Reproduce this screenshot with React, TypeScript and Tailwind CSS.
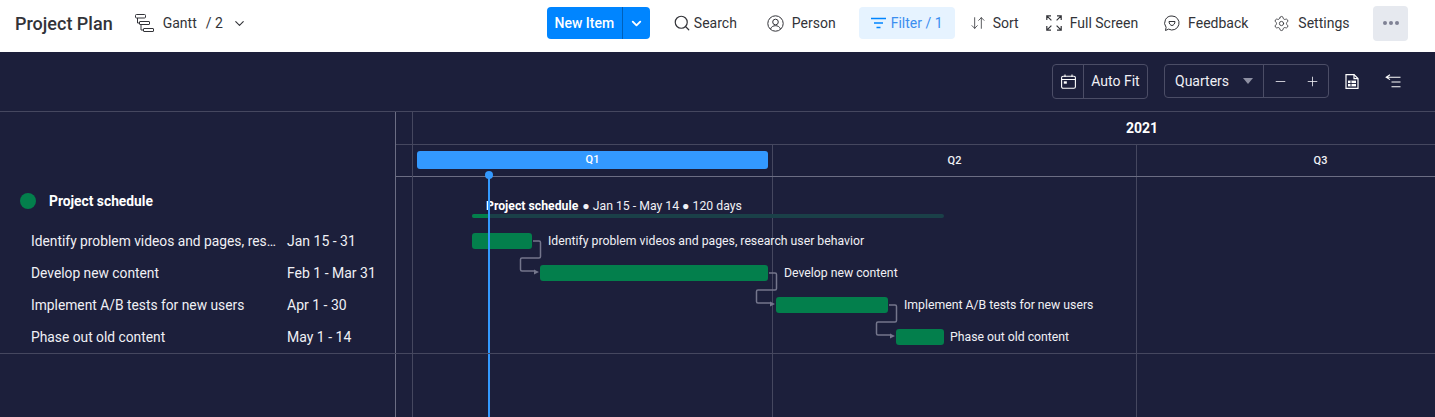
import { ChevronDown, Search, ArrowDownUp, Settings, Plus, Minus } from 'lucide-react'

function GanttIcon() {
  return (
    <svg width="19" height="19" viewBox="0 0 19 19" fill="none" stroke="#323338" strokeWidth="1">
      <rect x="0.5" y="0.5" width="10" height="3.5" rx="1" />
      <rect x="4.500" y="7.500" width="10" height="3" rx="0.5" />
      <rect x="8.500" y="14.500" width="10" height="3" rx="0.5" />
      <path d="M2.500 4v5h2M6 10.500V16h2.500" />
    </svg>
  )
}

function PersonIcon() {
  return (
    <svg width="17" height="17" viewBox="0 0 17 17" fill="none" stroke="#323338" strokeWidth="1">
      <circle cx="8.5" cy="8.5" r="7.7" />
      <circle cx="8.5" cy="7" r="2.8" />
      <path d="M3.5 14c1-2.5 3-3.3 5-3.3s4 .8 5 3.3" />
    </svg>
  )
}

function FilterIcon() {
  return (
    <svg width="16" height="12" viewBox="0 0 16 12" fill="none" stroke="#0085ff" strokeWidth="1.6">
      <path d="M0 1.5h15M3 6h9M5.5 10.5h4" />
    </svg>
  )
}

function FullScreenIcon() {
  return (
    <svg width="16" height="16" viewBox="0 0 16 16" fill="none" stroke="#323338" strokeWidth="1.2">
      <path d="M.8 5V.8H5M.8.8l4.6 4.6M15.2 5V.8H11M15.2.8l-4.6 4.6M.8 11v4.2H5M.8 15.2l4.6-4.6M15.2 11v4.2H11M15.2 15.2l-4.6-4.6" />
    </svg>
  )
}

function FeedbackIcon() {
  return (
    <svg width="16" height="17" viewBox="0 0 16 17" fill="none" stroke="#323338" strokeWidth="1">
      <path d="M8 1a7 7 0 1 1-3.4 13.1L1.5 15.5l.6-3.2A7 7 0 0 1 8 1Z" />
      <path d="M5 6.500h6c0 2-1.500 4-3 4s-3-2-3-4Z" />
    </svg>
  )
}

function CalendarIcon() {
  return (
    <svg width="15" height="15" viewBox="0 0 15 15" fill="none" stroke="#fff" strokeWidth="1.1">
      <rect x="0.6" y="2.2" width="13.8" height="12" rx="1.5" />
      <path d="M0.6 5.5h13.8M4 .5v2.5M11 .5v2.5" />
      <rect x="2.8" y="7.3" width="3" height="2.4" fill="#fff" stroke="none" />
    </svg>
  )
}

function ExportIcon() {
  return (
    <svg width="14" height="15" viewBox="0 0 14 15" fill="none">
      <path d="M1 .6h8l4 4v9.8H1Z" fill="#1c1f3b" stroke="#fff" strokeWidth="1.2" />
      <path d="M9 .6v4h4" stroke="#fff" strokeWidth="1.2" />
      <rect x="3" y="6.6" width="8" height="5.8" fill="#fff" />
      <path d="M3 9.5h8M6 6.6v5.8" stroke="#1c1f3b" strokeWidth="0.9" />
    </svg>
  )
}

function CollapseIcon() {
  return (
    <svg width="16" height="14" viewBox="0 0 16 14" fill="none" stroke="#fff" strokeWidth="1.1">
      <path d="M5 .7 1.2 3.2 5 5.6M1.2 3.2h14.3M6.5 8h9M6.5 12.8h9" />
    </svg>
  )
}

function ToolItem({ icon, label, className }: { icon: React.ReactNode; label: string; className: string }) {
  return (
    <div className={`flex items-center text-[14px] text-[#323338] ${className}`}>
      {icon}
      <span>{label}</span>
    </div>
  )
}

const tasks = [
  { name: 'Identify problem videos and pages, research user behavior', dates: 'Jan 15 - 31' },
  { name: 'Develop new content', dates: 'Feb 1 - Mar 31' },
  { name: 'Implement A/B tests for new users', dates: 'Apr 1 - 30' },
  { name: 'Phase out old content', dates: 'May 1 - 14' },
]

const bars = [
  { left: 59, width: 60, top: 56, labelLeft: 135 },
  { left: 127, width: 228, top: 88, labelLeft: 371 },
  { left: 363, width: 112, top: 120, labelLeft: 491 },
  { left: 483, width: 48, top: 152, labelLeft: 537 },
]

function Timeline() {
  return (
    <div className="relative flex-1 min-w-0 overflow-hidden text-[12.25px] text-[#f0f0f5]">
      <div className="h-[33px] w-[1458px] flex items-center justify-center border-b border-[#45475f]">
        <span className="text-[14px] font-bold text-white">2021</span>
      </div>
      <div className="h-[32px] w-[1100px] flex border-b border-[#6b6d83] text-[11px] font-medium">
        <div className="w-[360px] pl-[4px] py-[6px] border-r border-[#45475f]">
          <div className="h-[18px] w-[351px] pt-[1px] rounded-[3px] bg-[#3399ff] flex items-center justify-center text-white">Q1</div>
        </div>
        <div className="w-[364px] pt-[1px] flex items-center justify-center border-r border-[#45475f]">Q2</div>
        <div className="w-[367px] pt-[1px] flex items-center justify-center">Q3</div>
      </div>
      {/* grid lines through the chart */}
      <div className="absolute left-[359px] top-[65px] bottom-0 w-px bg-[#45475f]" />
      <div className="absolute left-[723px] top-[65px] bottom-0 w-px bg-[#45475f]" />

      {/* chart canvas, top is the y=177 row */}
      <div className="relative">
        <div className="absolute left-[73px] top-[20px] leading-[18px] whitespace-nowrap">
          <span className="font-bold text-white mr-[1px]">Project schedule</span> ● Jan 15 - May 14 ● 120 days
        </div>
        <div className="absolute left-[59px] top-[37px] h-[4px] w-[472px] rounded-[2px] bg-[#1a4048]">
          <div className="h-full w-[16px] rounded-l-[2px] bg-[#037f4c]" />
        </div>
        {bars.map((b, i) => (
          <div key={i}>
            <div className="absolute h-[16px] rounded-[3px] bg-[#037f4c]" style={{ left: b.left, width: b.width, top: b.top }} />
            <div className="absolute whitespace-nowrap leading-[16px]" style={{ left: b.labelLeft, top: b.top }}>
              {tasks[i].name}
            </div>
          </div>
        ))}
        <svg className="absolute left-0 top-0" width="560" height="180" fill="none" stroke="#74768c" strokeWidth="1.5">
          <path d="M120 64h6a1.5 1.5 0 0 1 1.5 1.5v14a1.5 1.5 0 0 1-1.5 1.5h-17a1.5 1.5 0 0 0-1.5 1.5v10a1.5 1.5 0 0 0 1.500 1.500h12" />
          <path d="M356 96h6a1.5 1.5 0 0 1 1.5 1.5v14a1.5 1.5 0 0 1-1.5 1.5h-17a1.5 1.5 0 0 0-1.5 1.5v10a1.5 1.5 0 0 0 1.500 1.500h12" />
          <path d="M476 128h6a1.5 1.5 0 0 1 1.5 1.5v14a1.5 1.5 0 0 1-1.5 1.5h-17a1.5 1.5 0 0 0-1.5 1.5v10a1.5 1.500 0 0 0 1.500 1.500h12" />
          <path d="M121 92.500v5l5-2.500ZM357 124.500v5l5-2.500ZM477 156.500v5l5-2.500Z" fill="#74768c" stroke="none" />
        </svg>
      </div>

      {/* today marker */}
      <div className="absolute left-[75px] top-[62px] bottom-0 w-[2px] bg-[#3399ff]" />
      <div className="absolute left-[72px] top-[59px] h-[8px] w-[8px] rounded-full bg-[#3399ff]" />
    </div>
  )
}

export default function App() {
  return (
    <div className="w-[1435px] h-[417px] overflow-hidden flex flex-col bg-[#1c1f3b] font-['Roboto',sans-serif]">
      <header className="h-[52px] pb-[6px] bg-white flex items-center shrink-0">
        <span className="ml-[15px] text-[18px] font-medium text-[#323338]">Project Plan</span>
        <div className="ml-[22px] flex items-center text-[14px] text-[#323338]">
          <GanttIcon />
          <span className="ml-[9px]">Gantt</span>
          <span className="ml-[9px]">/ 2</span>
          <ChevronDown size={15} strokeWidth={1.8} className="ml-[9px]" />
        </div>
        <div className="ml-[300px] h-[32px] w-[103px] rounded-[4px] bg-[#0085ff] flex items-center text-[14px] font-medium text-white">
          <span className="w-[75px] text-center">New Item</span>
          <div className="h-full flex-1 flex items-center justify-center border-l border-[#0060b9]">
            <ChevronDown size={15} strokeWidth={3} />
          </div>
        </div>
        <ToolItem icon={<Search size={18} strokeWidth={1.6} className="mr-[3px]" />} label="Search" className="ml-[23px]" />
        <ToolItem icon={<PersonIcon />} label="Person" className="ml-[30px] gap-[8px]" />
        <div className="ml-[23px] h-[32px] w-[96px] rounded-[4px] bg-[#e6f3ff] flex items-center pl-[12px] gap-[4px] text-[14px] text-[#3b8eef]">
          <FilterIcon />
          <span>Filter / 1</span>
        </div>
        <ToolItem icon={<ArrowDownUp size={16} strokeWidth={1.2} />} label="Sort" className="ml-[15px] gap-[7px]" />
        <ToolItem icon={<FullScreenIcon />} label="Full Screen" className="ml-[27px] gap-[8px]" />
        <ToolItem icon={<FeedbackIcon />} label="Feedback" className="ml-[26px] gap-[8px]" />
        <ToolItem icon={<Settings size={17} strokeWidth={1.2} />} label="Settings" className="ml-[25px] gap-[8px]" />
        <div className="ml-[24px] h-[35px] w-[35px] rounded-[4px] bg-[#e6e9ef] flex items-center justify-center gap-[2px]">
          <span className="h-[4px] w-[4px] rounded-full bg-[#7f8194]" />
          <span className="h-[4px] w-[4px] rounded-full bg-[#7f8194]" />
          <span className="h-[4px] w-[4px] rounded-full bg-[#7f8194]" />
        </div>
      </header>

      <div className="h-[60px] shrink-0 flex items-center border-b border-[#45475f] text-[14px] text-[#f0f0f5] pb-[1px]">
        <div className="ml-[1052px] h-[35px] w-[96px] flex rounded-[4px] border border-[#4b4d66]">
          <div className="w-[31px] flex items-center justify-center border-r border-[#4b4d66]">
            <CalendarIcon />
          </div>
          <div className="flex-1 flex items-center justify-center">Auto Fit</div>
        </div>
        <div className="ml-[16px] h-[34px] w-[165px] flex rounded-[4px] border border-[#4b4d66]">
          <div className="w-[99px] flex items-center pl-[10px] border-r border-[#4b4d66]">
            Quarters
            <span className="ml-[14px] h-0 w-0 border-x-[5px] border-t-[6px] border-x-transparent border-t-[#8e90a3]" />
          </div>
          <div className="flex-1 flex items-center pl-[9px] gap-[17px]">
            <Minus size={15} strokeWidth={1.3} />
            <Plus size={15} strokeWidth={1.3} />
          </div>
        </div>
        <div className="ml-[16px]"><ExportIcon /></div>
        <div className="ml-[26px]"><CollapseIcon /></div>
      </div>

      <div className="flex flex-1 min-h-0 relative">
        <div className="w-[396px] shrink-0 border-r border-[#6b6d83] text-[13.8px] text-[#f0f0f5]">
          <div className="mt-[79px] h-[20px] flex items-center pl-[20px]">
            <span className="h-[16px] w-[16px] rounded-full bg-[#037f4c]" />
            <span className="ml-[13px] font-bold text-white">Project schedule</span>
          </div>
          <div className="mt-[14px]">
            {tasks.map(t => (
              <div key={t.dates} className="h-[32px] flex items-center pl-[31px]">
                <span className="w-[245px] truncate">{t.name}</span>
                <span className="ml-[11px] whitespace-nowrap text-[14px]">{t.dates}</span>
              </div>
            ))}
          </div>
        </div>
        <div className="w-[17px] shrink-0 border-r border-[#45475f]">
          <div className="h-[33px] border-b border-[#45475f]" />
          <div className="h-[32px] border-b border-[#6b6d83]" />
        </div>
        <Timeline />
        <div className="absolute left-0 right-0 top-[241px] h-px bg-[#45475f]" />
      </div>
    </div>
  )
}
